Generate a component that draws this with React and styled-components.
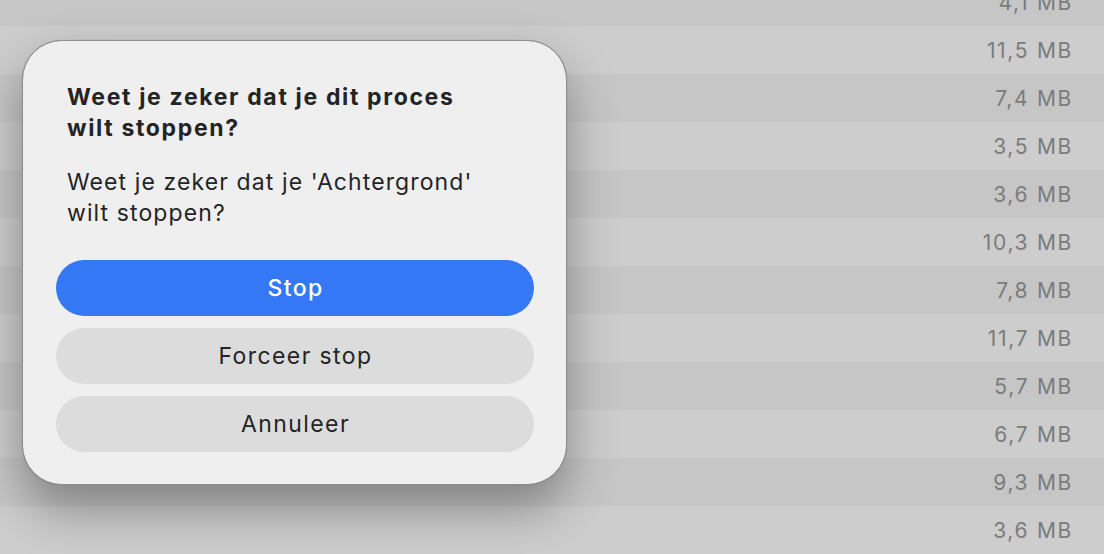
import React from "react";
import styled, { createGlobalStyle } from "styled-components";

const Global = createGlobalStyle`
  html, body { margin: 0; padding: 0; }
  body {
    width: 1104px; height: 554px; overflow: hidden;
    background: #c6c6c6;
    font-family: Inter, "Noto Sans", "Liberation Sans", sans-serif;
    -webkit-font-smoothing: antialiased;
  }
`;

const Page = styled.div`
  position: relative;
  width: 1104px;
  height: 554px;
  overflow: hidden;
`;

const List = styled.div`
  display: flex;
  flex-direction: column;
  margin-top: -22px;
`;

const Row = styled.div`
  height: 48px;
  display: flex;
  align-items: center;
  justify-content: flex-end;
  padding-right: 31px;
  background: ${(p) => (p.$alt ? "#cdcdcd" : "#c6c6c6")};
  color: #7b7b7b;
  font-size: 21px;
  letter-spacing: 1.7px;
`;

const Dialog = styled.div`
  position: absolute;
  left: 22px;
  top: 40px;
  width: 545px;
  box-sizing: border-box;
  padding: 41px 32px 32px 33px;
  background: #efefef;
  border: 1px solid #8e8e8e;
  border-radius: 40px;
  box-shadow: 0 24px 48px rgba(0, 0, 0, 0.34), 0 0 1px rgba(0,0,0,0.3);
  display: flex;
  flex-direction: column;
`;

const Texts = styled.div`
  padding: 0 11px;
  display: flex;
  flex-direction: column;
  gap: 23px;
  margin-bottom: 31px;
`;

const Title = styled.div`
  font-size: 23px;
  line-height: 31px;
  font-weight: 700;
  color: #242424;
  letter-spacing: 1.65px;
`;

const Message = styled.div`
  font-size: 23px;
  line-height: 31px;
  font-weight: 400;
  color: #242424;
  letter-spacing: 1.1px;
`;

const Buttons = styled.div`
  display: flex;
  flex-direction: column;
  gap: 12px;
`;

const Button = styled.button`
  height: 56px;
  border: none;
  border-radius: 28px;
  font-family: inherit;
  font-size: 23px;
  letter-spacing: 1.4px;
  font-weight: ${(p) => (p.$primary ? 500 : 400)};
  color: ${(p) => (p.$primary ? "#ffffff" : "#242424")};
  background: ${(p) => (p.$primary ? "#3478f6" : "#dcdcdc")};
  display: flex;
  align-items: center;
  justify-content: center;
  padding: 0 0 0 1px;
`;

const sizes = ["4,1", "11,5", "7,4", "3,5", "3,6", "10,3", "7,8", "11,7", "5,7", "6,7", "9,3", "3,6"];

export default function App() {
  return (
    <Page>
      <Global />
      <List>
        {sizes.map((s, i) => (
          <Row key={i} $alt={i % 2 === 1}>{s} MB</Row>
        ))}
      </List>
      <Dialog>
        <Texts>
          <Title>Weet je zeker dat je dit proces<br />wilt stoppen?</Title>
          <Message>Weet je zeker dat je 'Achtergrond'<br />wilt stoppen?</Message>
        </Texts>
        <Buttons>
          <Button $primary>Stop</Button>
          <Button>Forceer stop</Button>
          <Button>Annuleer</Button>
        </Buttons>
      </Dialog>
    </Page>
  );
}
